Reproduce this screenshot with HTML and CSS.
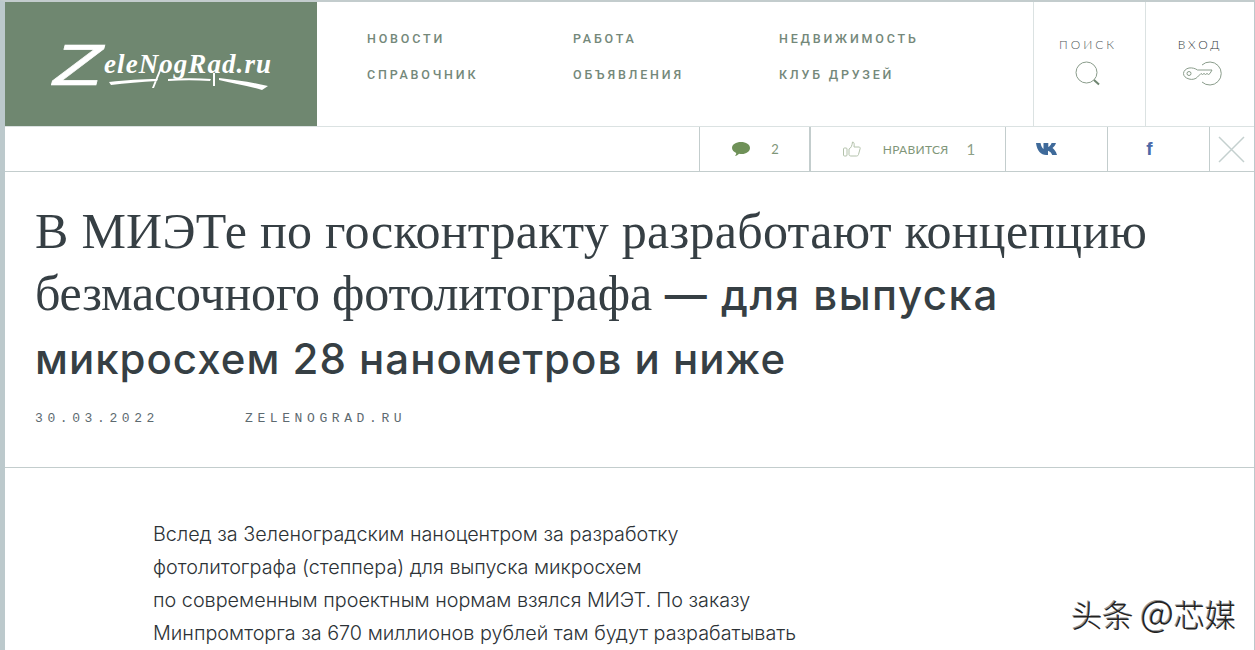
FILE: index.html
```html
<!DOCTYPE html>
<html lang="ru">
<head>
<meta charset="utf-8">
<title>Zelenograd.ru</title>
<link rel="stylesheet" href="styles.css">
</head>
<body>
<div class="page">
  <header class="top">
    <a class="logo">
      <svg class="logo-svg" width="224" height="70" viewBox="-4 -10 224 70">
        <text class="logo-z" x="0" y="0" transform="translate(1 45) scale(1.4 1)">Z</text>
        <text class="logo-t" x="52" y="33" textLength="167" lengthAdjust="spacing">eleNogRad.ru</text>
        <path class="logo-fill" d="M57 42c18-2 32-3 49-3l-1 2c-16 1-32 2-46 4zM116 39c16-1 30-1 43 0l-1 2c-14-1-28-1-42 0zM161 33l2 0 0 13-2 0zM167 38c18 2 32 4 49 8l-6 4c-14-4-30-7-43-10zM110 28l-8 20-2 0 8-20z"/>
      </svg>
    </a>
    <nav class="nav">
      <a>НОВОСТИ</a><a>РАБОТА</a><a>НЕДВИЖИМОСТЬ</a>
      <a>СПРАВОЧНИК</a><a>ОБЪЯВЛЕНИЯ</a><a>КЛУБ ДРУЗЕЙ</a>
    </nav>
    <div class="tool tool-search">
      <span class="tool-label tool-label-search">ПОИСК</span>
      <svg class="icon-search" width="26" height="26" viewBox="0 0 26 26"><circle cx="11.500" cy="11.500" r="10.500" fill="none" stroke="#8a9c8b"/><path d="M19 19l5 4.500" stroke="#6f8570" stroke-width="2" fill="none"/></svg>
    </div>
    <div class="tool tool-login">
      <span class="tool-label tool-label-dark">ВХОД</span>
      <svg class="icon-key" width="40" height="26" viewBox="0 0 40 26"><g fill="none" stroke="#8a9c8b"><path d="M19 4a11.500 11.500 0 1 1 0 17"/><path d="M14.500 9H29l-2 3.500-1.500 1-1.500-1-1.500 1-1.500-1-1.500 1-1.500-1-3.500 3.500C13 18 9 19 6 18 2.500 17 .5 15 .5 12.500S3 7.500 6 7c3-.5 6.500.5 8.500 2z"/><circle cx="6" cy="12.500" r="2"/></g></svg>
    </div>
  </header>
  <div class="bar">
    <div class="cell cell-comments">
      <svg width="18" height="15" viewBox="0 0 18 15"><path fill="#6f9158" d="M9 0c5 0 9 2.500 9 6s-4 6-8 6c-1 0-2 0-3-.2C6 13 4.500 14 3 14c.8-.8 1.200-2 1.200-3C2 10 0 8.200 0 6c0-3.500 4-6 9-6z"/></svg>
      <span class="count">2</span>
    </div>
    <div class="cell cell-like">
      <svg width="18" height="16" viewBox="0 0 18 16"><g fill="none" stroke="#b3c2ab"><rect x=".5" y="7" width="3.500" height="8" rx="1"/><path d="M6 8c2-1 3-3 3.500-7 1.500 0 2 1.500 1.500 5h5c1 0 1.500 1 1 2l-1.500 5.500c-.3 1-1 1.500-2 1.500H8c-1 0-2-.4-2-1.500z"/></g></svg>
      <span class="like-label">НРАВИТСЯ</span>
      <span class="like-count">1</span>
    </div>
    <div class="cell cell-social">
      <svg width="24" height="14" viewBox="0 0 24 14"><path fill="#3f6a9a" d="M0 1h4.500c.6 3 2 5.500 3 6V1h4.800v4c1.200-.4 2.500-2 3.300-4h4.400c-.6 2-2.200 4-3.500 5 1.500 1 3.400 3 4.500 7h-4.800c-.8-2-2.200-3.700-4.200-4.300V13h-1.800C5 13 1 9 0 1z"/></svg>
    </div>
    <div class="cell cell-social">
      <span class="fb">f</span>
    </div>
    <div class="cell cell-close">
      <svg width="27" height="27" viewBox="0 0 27 27"><path d="M1 1l25 25M26 1L1 26" stroke="#c4d0cf" stroke-width="1.500" fill="none"/></svg>
    </div>
  </div>
  <section class="head">
    <h1 class="title">
      <span class="line serif line-wide">В МИЭТе по госконтракту разработают концепцию</span>
      <span class="line line-mixed"><span class="serif line-tight">безмасочного фотолитографа</span> <span class="sans sans-mixed">— для выпуска</span></span>
      <span class="line line-last sans">микросхем 28 нанометров и ниже</span>
    </h1>
    <div class="meta"><span class="date">30.03.2022</span><span class="source">ZELENOGRAD.RU</span></div>
  </section>
  <article class="body">
    <p>Вслед за Зеленоградским наноцентром за разработку<br>фотолитографа (степпера) для выпуска микросхем<br>по современным проектным нормам взялся МИЭТ. По заказу<br>Минпромторга за 670 миллионов рублей там будут разрабатывать</p>
  </article>
  <div class="watermark">头条 <span class="wm-at">@</span>芯媒</div>
</div>
</body>
</html>
```
FILE: styles.css
```css
* { box-sizing: border-box; }
html, body { margin: 0; height: 100%; overflow: hidden; background: #fff; }
.page {
  position: relative;
  height: 650px;
  overflow: hidden;
  border-top: 2px solid #c3cccd;
  border-left: 5px solid #bcc9cc;
  border-right: 1px solid #bcc9cc;
  font-family: "Lato", "Liberation Sans", sans-serif;
}
.top { display: flex; height: 125px; border-bottom: 1px solid #dbe2e2; }
.logo { width: 312px; height: 124px; background: #6f8770; display: flex; align-items: center; justify-content: center; }
.logo-svg { display: block; margin: 2px 2px 0 0; }
.logo-z { font: italic 400 58px "Liberation Sans", sans-serif; fill: #fff; stroke: #fff; stroke-width: .6px; }
.logo-t { font: italic 700 27px "Liberation Serif", serif; fill: #fff; }
.logo-fill { fill: #fff; }
.nav {
  flex: 1;
  display: grid;
  grid-template-columns: repeat(3, 206px);
  grid-auto-rows: 36px;
  padding: 19px 0 0 50px;
  font-family: "Roboto", sans-serif;
  font-size: 12.500px;
  font-weight: 500;
  letter-spacing: 2.800px;
  color: #74887a;
  line-height: 36px;
}
.tool { display: flex; flex-direction: column; align-items: center; border-left: 1px solid #dbe2e2; padding-top: 36px; }
.tool-search { width: 112px; }
.tool-login { width: 109px; }
.tool-label { font-size: 12px; font-weight: 300; letter-spacing: 3px; color: #4f5759; line-height: 14px; margin-bottom: 9px; }
.tool-label-search { margin-right: 3px; }
.tool-label-dark { color: #33393c; }
.icon-search { margin-right: 4px; }
.icon-key { margin-left: 6px; }
.bar { display: flex; justify-content: flex-end; height: 45px; border-bottom: 1px solid #c3cdcd; }
.cell { display: flex; align-items: center; justify-content: center; border-left: 1px solid #c3cdcd; height: 44px; }
.cell-comments { width: 110px; gap: 21px; padding-left: 2px; }
.cell-like { width: 196px; border-left-width: 2px; padding-left: 2px; font-size: 12px; color: #7f9679; }
.cell-social { width: 102px; padding-right: 18px; }
.cell-close { width: 45px; padding-right: 2px; }
.count { font-size: 13px; color: #7f9679; }
.like-label { margin-left: 22px; font-size: 12px; letter-spacing: .3px; }
.like-count { margin-left: 18px; font-size: 15px; color: #8da087; }
.fb { font: 700 19px "Liberation Sans", sans-serif; color: #4c69a8; }
.head { height: 296px; border-bottom: 1px solid #c3cdcd; padding: 28px 30px 0 30px; }
.title { margin: 0; font-size: 50px; line-height: 62.500px; font-weight: 400; color: #363f44; }
.line { display: block; height: 62.500px; white-space: nowrap; }
.line-mixed { height: 59.500px; line-height: 56.500px; }
.line-last { height: 74.500px; line-height: 74.500px; }
.serif { font-family: "Liberation Serif", serif; }
.line-wide { letter-spacing: .27px; }
.line-tight { letter-spacing: -.2px; }
.sans { font-family: "Inter", sans-serif; font-weight: 450; font-size: 42px; letter-spacing: 1px; }
.sans-mixed { letter-spacing: 1.500px; }
.meta { display: flex; margin-top: 13px; font-family: "Liberation Mono", monospace; font-size: 13px; letter-spacing: 4.600px; line-height: 18px; color: #5d6a70; }
.date { width: 210px; }
.body { padding: 50px 0 0 148px; }
.body p { margin: 0; font-family: "Inter", sans-serif; font-size: 19.800px; line-height: 33px; font-weight: 300; color: #2c3236; }
.watermark {
  position: absolute;
  right: 18px;
  bottom: 16px;
  font-family: "Noto Sans CJK SC", sans-serif;
  font-size: 31px;
  font-weight: 300;
  line-height: 40px;
  color: #222;
  text-shadow: 1px 1px 0 #fff, -1px -1px 0 #999;
}
.wm-at { font-size: 37px; line-height: 30px; }
```
